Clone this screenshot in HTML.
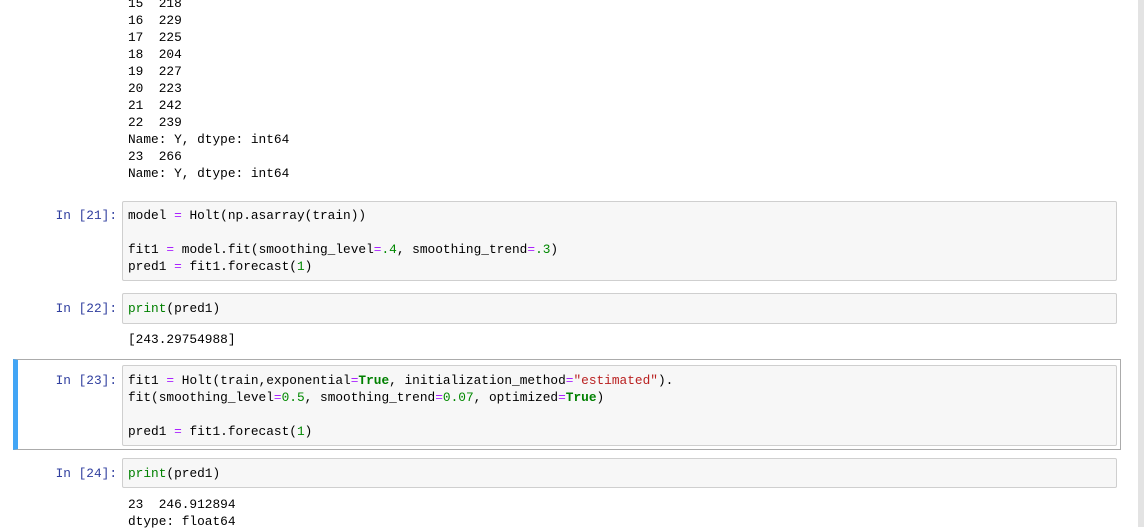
<!DOCTYPE html>
<html><head><meta charset="utf-8"><style>
body{margin:0;width:1144px;height:527px;overflow:hidden;background:#fff;position:relative;font-family:"Liberation Mono",monospace;font-size:12.8px;color:#000}
.sb{position:absolute;left:1138px;top:0;width:6px;height:527px;background:#e3e3e3}
.ln{position:absolute;left:128px;white-space:pre;line-height:17px;height:17px}
.p{position:absolute;width:117px;text-align:right;color:#303f9f;white-space:pre;line-height:17px}
.box{position:absolute;left:122px;width:993px;background:#f7f7f7;border:1px solid #cfcfcf;border-radius:2px}
.sel{position:absolute;left:13px;top:359px;width:1108px;height:91px;border:1px solid #ababab;border-left:5px solid #42a5f5;box-sizing:border-box}
.o{color:#aa22ff}.n{color:#008800}.k{color:#008000;font-weight:bold}.s{color:#ba2121}.b{color:#008000}
</style></head><body>
<div class="sb"></div>
<div class="ln" style="top:-5px">15  218</div>
<div class="ln" style="top:12px">16  229</div>
<div class="ln" style="top:29px">17  225</div>
<div class="ln" style="top:46px">18  204</div>
<div class="ln" style="top:63px">19  227</div>
<div class="ln" style="top:80px">20  223</div>
<div class="ln" style="top:97px">21  242</div>
<div class="ln" style="top:114px">22  239</div>
<div class="ln" style="top:131px">Name: Y, dtype: int64</div>
<div class="ln" style="top:148px">23  266</div>
<div class="ln" style="top:165px">Name: Y, dtype: int64</div>

<div class="box" style="top:201px;height:78px"></div>
<div class="p" style="top:207px">In [21]:</div>
<div class="ln" style="top:207px">model <span class="o">=</span> Holt(np.asarray(train))</div>
<div class="ln" style="top:241px">fit1 <span class="o">=</span> model.fit(smoothing_level<span class="o">=</span><span class="n">.4</span>, smoothing_trend<span class="o">=</span><span class="n">.3</span>)</div>
<div class="ln" style="top:258px">pred1 <span class="o">=</span> fit1.forecast(<span class="n">1</span>)</div>

<div class="box" style="top:293px;height:29px"></div>
<div class="p" style="top:300px">In [22]:</div>
<div class="ln" style="top:300px"><span class="b">print</span>(pred1)</div>
<div class="ln" style="top:331px">[243.29754988]</div>

<div class="sel"></div>
<div class="box" style="top:365px;height:79px"></div>
<div class="p" style="top:372px">In [23]:</div>
<div class="ln" style="top:372px">fit1 <span class="o">=</span> Holt(train,exponential<span class="o">=</span><span class="k">True</span>, initialization_method<span class="o">=</span><span class="s">"estimated"</span>).</div>
<div class="ln" style="top:389px">fit(smoothing_level<span class="o">=</span><span class="n">0.5</span>, smoothing_trend<span class="o">=</span><span class="n">0.07</span>, optimized<span class="o">=</span><span class="k">True</span>)</div>
<div class="ln" style="top:423px">pred1 <span class="o">=</span> fit1.forecast(<span class="n">1</span>)</div>

<div class="box" style="top:458px;height:28px"></div>
<div class="p" style="top:465px">In [24]:</div>
<div class="ln" style="top:465px"><span class="b">print</span>(pred1)</div>
<div class="ln" style="top:496px">23  246.912894</div>
<div class="ln" style="top:513px">dtype: float64</div>
</body></html>
